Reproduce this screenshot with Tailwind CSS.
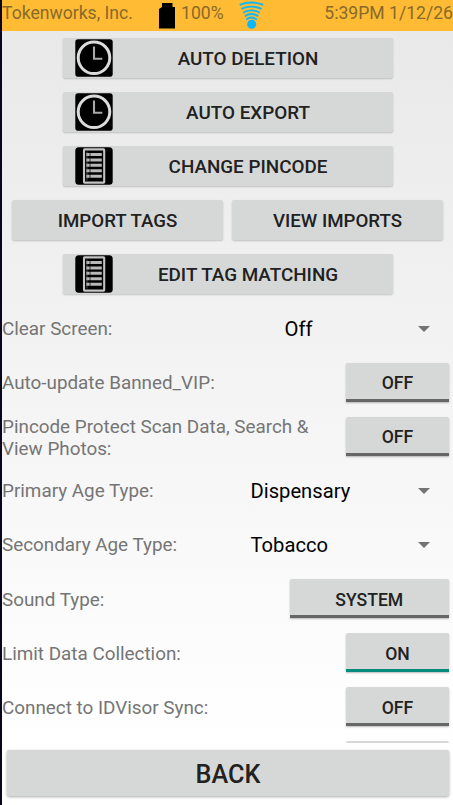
<!DOCTYPE html>
<html lang="en">
<head>
<meta charset="utf-8">
<title>Settings</title>
<script src="https://cdn.jsdelivr.net/npm/@tailwindcss/browser@4"></script>
</head>
<body class="w-[453px] h-[805px] overflow-hidden">
<svg class="hidden">
  <symbol id="clock" viewBox="0 0 38 38">
    <rect x="0.3" y="0.3" width="37.4" height="37.4" rx="2.8" fill="#000"/>
    <circle cx="19" cy="18.8" r="15.8" fill="none" stroke="#dcdcdc" stroke-width="3"/>
    <path d="M19 7.5V19.8H27.3" fill="none" stroke="#a8a8a8" stroke-width="2.1"/>
  </symbol>
  <symbol id="list" viewBox="0 0 38 38">
    <rect x="0.3" y="0.3" width="37.4" height="37.4" rx="3.5" fill="#000"/>
    <rect x="9" y="2.4" width="20.2" height="33.2" rx="0.6" fill="none" stroke="#c4c4c4" stroke-width="2.1"/>
    <path d="M11.3 7.4H26.8M11.3 12.9H26.8M11.3 18.3H26.8M11.3 23.7H26.8M11.3 29.2H26.8" stroke="#b8b8b8" stroke-width="3"/>
    <path d="M15 4.5V33.5" stroke="#000" stroke-width="1" stroke-opacity=".7"/>
    <path d="M12 4.5V33.5" stroke="#888" stroke-width="0.8" stroke-opacity=".7"/>
  </symbol>
  <symbol id="caret" viewBox="0 0 12 6"><path d="M0 0H12L6 6Z" fill="#737373"/></symbol>
</svg>
<div class="flex flex-col w-full h-full border-l-2 border-[#08051f] bg-linear-to-b from-[#e8e8e8] to-white to-[92%] font-['Roboto',sans-serif] text-[18.85px] leading-[22px] text-[#757575]">
  <header class="h-[31px] shrink-0 bg-[#ffbb33] flex text-[#876a2c] text-[17.6px] leading-[26px] whitespace-nowrap">
    <span class="w-[156px]">Tokenworks, Inc.</span>
    <svg class="w-[18px] h-[27px] mt-[2px]" viewBox="0 0 18 27"><path d="M4 1H14.5V5H17V26.5H1V7L4 5Z" fill="#000"/></svg>
    <span class="w-[60px] pl-[5px]">100%</span>
    <svg class="w-[28px] h-[29px]" viewBox="0 0 28 29" fill="none" stroke="#0bb8fb" stroke-width="1.9">
      <circle cx="15.7" cy="24.3" r="4.5" fill="#0bb8fb" stroke="none"/>
      <path d="M3.7 4.8Q15.5 .2 27.3 4.8M5.4 8.9Q15.5 4.3 25.6 8.9M7.2 12.6Q15.5 8.2 23.8 12.6M8.8 16.1Q15.5 11.9 22.2 16.1M10.2 19.4Q15.5 15.6 20.8 19.4"/>
    </svg>
    <span class="ml-auto">5:39PM 1/12/26</span>
  </header>
  <main class="h-[712px] shrink-0 overflow-hidden">
    <div class="h-[54px] pt-[7px] pl-[61px]"><button class="w-[330px] h-[40px] rounded-[2px] bg-[#d6d8d7] shadow-[0_1px_2px_#0003] flex items-center pl-[12px] text-[#212121] font-medium"><svg class="w-[38px] h-[38px]"><use href="#clock"/></svg><span class="flex-1 text-center pr-[10px] pt-[2px]">AUTO DELETION</span></button></div>
    <div class="h-[54px] pt-[7px] pl-[61px]"><button class="w-[330px] h-[40px] rounded-[2px] bg-[#d6d8d7] shadow-[0_1px_2px_#0003] flex items-center pl-[12px] text-[#212121] font-medium"><svg class="w-[38px] h-[38px]"><use href="#clock"/></svg><span class="flex-1 text-center pr-[10px] pt-[2px]">AUTO EXPORT</span></button></div>
    <div class="h-[54px] pt-[7px] pl-[61px]"><button class="w-[330px] h-[40px] rounded-[2px] bg-[#d6d8d7] shadow-[0_1px_2px_#0003] flex items-center pl-[12px] text-[#212121] font-medium"><svg class="w-[38px] h-[38px]"><use href="#list"/></svg><span class="flex-1 text-center pr-[10px] pt-[2px]">CHANGE PINCODE</span></button></div>
    <div class="h-[54px] pt-[7px] pl-[10px] flex gap-[9px]">
      <button class="w-[211px] h-[40px] pt-[2px] rounded-[2px] bg-[#d6d8d7] shadow-[0_1px_2px_#0003] text-[#212121] text-[18.7px] font-medium">IMPORT TAGS</button>
      <button class="w-[211px] h-[40px] pt-[2px] rounded-[2px] bg-[#d6d8d7] shadow-[0_1px_2px_#0003] text-[#212121] text-[18.7px] font-medium">VIEW IMPORTS</button>
    </div>
    <div class="h-[54px] pt-[7px] pl-[61px]"><button class="w-[330px] h-[40px] rounded-[2px] bg-[#d6d8d7] shadow-[0_1px_2px_#0003] flex items-center pl-[12px] text-[#212121] font-medium"><svg class="w-[38px] h-[38px]"><use href="#list"/></svg><span class="flex-1 text-center pr-[10px] pt-[2px]">EDIT TAG MATCHING</span></button></div>
    <div class="h-[54px] flex items-center pr-[23px]"><span class="w-[282.5px] pt-[2px]">Clear Screen:</span><span class="flex-1 text-black text-[20.2px] pt-px">Off</span><svg class="w-[12px] h-[6px] mt-[2px]"><use href="#caret"/></svg></div>
    <div class="h-[54px] flex items-center justify-between pr-[4px]"><span class="pt-[2px]">Auto-update Banned_VIP:</span><button class="w-[103px] h-[39px] rounded-t-[2px] bg-[#d6d8d7] border-b-[3px] border-[#666] shadow-[0_1px_2px_#0004] text-[#212121] text-[17.6px] font-medium mt-px pt-[4px]">OFF</button></div>
    <div class="h-[54px] flex items-center justify-between pr-[4px]"><span class="w-[325px] pt-[3px]">Pincode Protect Scan Data, Search &amp; View Photos:</span><button class="w-[103px] h-[39px] rounded-t-[2px] bg-[#d6d8d7] border-b-[3px] border-[#666] shadow-[0_1px_2px_#0004] text-[#212121] text-[17.6px] font-medium mt-px pt-[4px]">OFF</button></div>
    <div class="h-[54px] flex items-center pr-[23px]"><span class="w-[248.5px] pt-[2px]">Primary Age Type:</span><span class="flex-1 text-black text-[20.2px] pt-px">Dispensary</span><svg class="w-[12px] h-[6px] mt-[2px]"><use href="#caret"/></svg></div>
    <div class="h-[54px] flex items-center pr-[23px]"><span class="w-[248.5px] pt-[2px]">Secondary Age Type:</span><span class="flex-1 text-black text-[20.2px] pt-px">Tobacco</span><svg class="w-[12px] h-[6px] mt-[2px]"><use href="#caret"/></svg></div>
    <div class="h-[54px] flex items-center justify-between pr-[4px]"><span class="pt-[3px]">Sound Type:</span><button class="w-[159.5px] h-[39px] rounded-t-[2px] bg-[#d6d8d7] border-b-[3px] border-[#666] shadow-[0_1px_2px_#0004] text-[#212121] text-[17.6px] font-medium mt-px pt-[5px]">SYSTEM</button></div>
    <div class="h-[54px] flex items-center justify-between pr-[4px]"><span class="pt-[3px]">Limit Data Collection:</span><button class="w-[103px] h-[39px] rounded-t-[2px] bg-[#d6d8d7] border-b-[3px] border-[#058b7b] shadow-[0_1px_2px_#0004] text-[#212121] text-[17.6px] font-medium mt-px pt-[5px]">ON</button></div>
    <div class="h-[54px] flex items-center justify-between pr-[4px]"><span class="pt-[3px]">Connect to IDVisor Sync:</span><button class="w-[103px] h-[39px] rounded-t-[2px] bg-[#d6d8d7] border-b-[3px] border-[#666] shadow-[0_1px_2px_#0004] text-[#212121] text-[17.6px] font-medium mt-px pt-[5px]">OFF</button></div>
    <div class="h-[54px] flex items-center justify-end pr-[4px]"><div class="w-[103px] h-[39px] rounded-t-[2px] bg-[#d6d8d7] mt-px"></div></div>
  </main>
  <footer class="pt-[7px] pl-[5px] pr-[4px]"><button class="w-full h-[46px] rounded-[2px] bg-[#d6d8d7] shadow-[0_1px_3px_#0005] text-[#212121] font-medium text-[25.2px] pt-[4px]">BACK</button></footer>
</div>
</body>
</html>
